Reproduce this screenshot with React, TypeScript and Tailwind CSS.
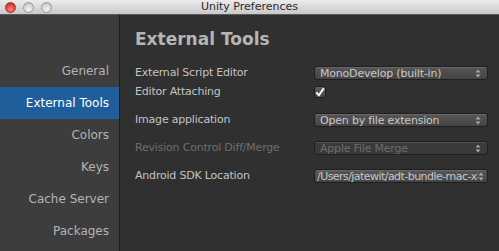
const font = { fontFamily: '"DejaVu Sans", "Liberation Sans", sans-serif' };

function Light({ red }: { red?: boolean }) {
  return (
    <span
      className={
        red
          ? 'block w-[11px] h-[11px] rounded-full border border-[#a3322c] bg-[radial-gradient(circle_at_50%_70%,#ff8a7c,#e0443a_55%,#b0241c)]'
          : 'block w-[11px] h-[11px] rounded-full border border-[#9a9a9a] bg-[radial-gradient(circle_at_50%_70%,#f4f4f4,#d6d6d6_55%,#b8b8b8)]'
      }
    />
  );
}

function Arrows() {
  return (
    <svg width="6" height="9" viewBox="0 0 6 9" className="shrink-0">
      <path d="M3 0.5 L5.5 3.5 H0.5 Z" fill="#a8a8a8" />
      <path d="M3 8.5 L5.5 5.5 H0.5 Z" fill="#a8a8a8" />
    </svg>
  );
}

function Select({ value, disabled, clip }: { value: string; disabled?: boolean; clip?: boolean }) {
  return (
    <div
      className={
        'w-[174px] h-[14px] flex items-center rounded-[3px] border border-[#1f1f1f] shadow-[inset_0_1px_0_rgba(255,255,255,0.12)] ' +
        (disabled
          ? 'bg-[#3a3a3a] text-[#6c6c6c] '
          : 'bg-[linear-gradient(#565656,#444)] text-[#c8c8c8] ') +
        (clip ? 'pl-[2px] pr-[3px]' : 'pl-[5px] pr-[6px]')
      }
    >
      <span
        className={
          'flex-1 min-w-0 overflow-hidden whitespace-nowrap text-[11px] leading-none ' +
          (clip ? 'tracking-[-0.55px]' : 'tracking-[-0.2px]')
        }
      >
        {value}
      </span>
      <Arrows />
    </div>
  );
}

export default function App() {
  const items = ['General', 'External Tools', 'Colors', 'Keys', 'Cache Server', 'Packages'];
  return (
    <div className="w-[499px] h-[251px] flex flex-col bg-[#303030] overflow-hidden" style={font}>
      <div className="h-[15px] shrink-0 relative flex items-center bg-[linear-gradient(#ececec,#c9c9c9)] border-b border-[#5a5a5a]">
        <div className="flex gap-[7px] pl-[5px]">
          <Light red />
          <Light />
          <Light />
        </div>
        <div className="absolute inset-0 flex items-center justify-center text-[11px] text-[#2a2a2a]">
          Unity Preferences
        </div>
      </div>
      <div className="flex-1 flex min-h-0">
        <div className="w-[120px] shrink-0 bg-[#3d3d3d] border-r border-[#1c1c1c] pt-[40px] flex flex-col">
          {items.map((it) => (
            <div
              key={it}
              className={
                'h-[32px] shrink-0 flex items-center justify-end pr-[10px] text-[12px] ' +
                (it === 'External Tools' ? 'bg-[#1f5e9a] text-white' : 'text-[#b4b4b4]')
              }
            >
              {it}
            </div>
          ))}
        </div>
        <div className="flex-1 pl-[15px] pt-[16px] text-[11px] tracking-[-0.2px] text-[#c4c4c4]">
          <div className="text-[17px] font-bold text-[#b5b5b5] leading-none h-[22px] tracking-normal">External Tools</div>
          <div className="mt-[13px] flex flex-col">
            <div className="flex items-center h-[14px]">
              <span className="w-[179px]">External Script Editor</span>
              <Select value="MonoDevelop (built-in)" />
            </div>
            <div className="flex items-center h-[14px] mt-[5px]">
              <span className="w-[179px]">Editor Attaching</span>
              <span className="w-[12px] h-[12px] rounded-[2px] border border-[#1f1f1f] bg-[linear-gradient(#5e5e5e,#464646)] flex items-center justify-center">
                <svg width="10" height="10" viewBox="0 0 10 10">
                  <path d="M1.3 5.3 L3.9 8.2 L8.8 1.2" stroke="#fff" strokeWidth="2" fill="none" />
                </svg>
              </span>
            </div>
            <div className="flex items-center h-[14px] mt-[14px]">
              <span className="w-[179px]">Image application</span>
              <Select value="Open by file extension" />
            </div>
            <div className="flex items-center h-[14px] mt-[14px]">
              <span className="w-[179px] text-[#6e6e6e]">Revision Control Diff/Merge</span>
              <Select value="Apple File Merge" disabled />
            </div>
            <div className="flex items-center h-[14px] mt-[14px]">
              <span className="w-[179px]">Android SDK Location</span>
              <Select value="/Users/jatewit/adt-bundle-mac-x8" clip />
            </div>
          </div>
        </div>
      </div>
    </div>
  );
}
